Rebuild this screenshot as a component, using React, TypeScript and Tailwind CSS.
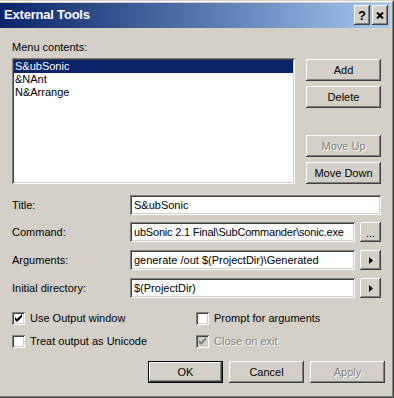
const raised =
  'shadow-[inset_-1px_-1px_#404040,inset_1px_1px_#ffffff,inset_-2px_-2px_#808080,inset_2px_2px_#d4d0c8]';
const sunken =
  'shadow-[inset_1px_1px_#808080,inset_-1px_-1px_#ffffff,inset_2px_2px_#404040,inset_-2px_-2px_#d4d0c8]';
const dimText = 'text-[#808080] [text-shadow:1px_1px_0_#ffffff]';

type BtnProps = { label: string; disabled?: boolean; isDefault?: boolean; className?: string };

function Button({ label, disabled, isDefault, className = '' }: BtnProps) {
  return (
    <div
      className={`flex items-center justify-center w-[75px] h-[22px] bg-[#d4d0c8] ${raised} ${
        isDefault ? 'border border-black' : ''
      } ${disabled ? dimText : 'text-black'} ${className}`}
    >
      {label}
    </div>
  );
}

function Field({ value, className = '' }: { value: string; className?: string }) {
  return (
    <div
      className={`h-[20px] bg-white ${sunken} flex items-center pl-[4px] overflow-hidden whitespace-nowrap ${className}`}
    >
      {value}
    </div>
  );
}

function Arrow() {
  return (
    <div className={`w-[21px] h-[20px] bg-[#d4d0c8] ${raised} flex items-center justify-center`}>
      <svg width="4" height="7" viewBox="0 0 4 7">
        <polygon points="0,0 4,3.5 0,7" fill="#000" />
      </svg>
    </div>
  );
}

function Check({ checked, disabled, label }: { checked?: boolean; disabled?: boolean; label: string }) {
  return (
    <div className="flex items-center gap-[5px] h-[13px]">
      <div className={`w-[13px] h-[13px] shrink-0 ${sunken} ${disabled ? 'bg-[#d4d0c8]' : 'bg-white'}`}>
        {checked && (
          <svg width="13" height="13" viewBox="0 0 13 13">
            <path d="M3 5 L5 7 L10 2 L10 5 L5 10 L3 8 Z" fill={disabled ? '#808080' : '#000'} />
          </svg>
        )}
      </div>
      <span className={disabled ? dimText : ''}>{label}</span>
    </div>
  );
}

const ITEMS = ['S&ubSonic', '&NAnt', 'N&Arrange'];

export default function App() {
  return (
    <div className="w-[394px] h-[398px] overflow-hidden bg-[#d4d0c8] font-['Liberation_Sans',Arial,sans-serif] text-[11px] leading-[13px] text-black border-t border-t-[#d4d0c8] border-r border-r-[#404040] border-b border-b-[#404040]">
      <div className="h-full flex flex-col border-t border-t-white border-r border-r-[#808080] border-b border-b-[#808080] pt-px pr-[2px]">
        {/* caption */}
        <div className="h-[25px] flex items-start pt-[2px] pl-[4px] pr-[2px] bg-linear-to-r from-[#0a246a] to-[#a6caf0]">
          <span className="flex-1 text-white font-bold text-[13px] leading-[20px] tracking-[-0.2px]">
            External Tools
          </span>
          <div className="flex gap-[2px]">
            <div className={`w-[16px] h-[20px] bg-[#d4d0c8] ${raised} flex items-center justify-center font-bold text-[13px]`}>
              ?
            </div>
            <div className={`w-[16px] h-[20px] bg-[#d4d0c8] ${raised} flex items-center justify-center`}>
              <svg width="8" height="7" viewBox="0 0 8 7">
                <path d="M1 0.5 L7 6.5 M7 0.5 L1 6.5" stroke="#000" strokeWidth="2" />
              </svg>
            </div>
          </div>
        </div>

        <div className="flex flex-col pl-[12px] pt-[13px]">
          <div>Menu contents:</div>

          <div className="flex mt-[4px]">
            <div className={`w-[283px] h-[126px] bg-white ${sunken} p-[2px]`}>
              {ITEMS.map((it, i) => (
                <div
                  key={it}
                  className={`h-[13px] pl-[1px] whitespace-nowrap ${i === 0 ? 'bg-[#0a246a] text-white' : ''}`}
                >
                  {it}
                </div>
              ))}
            </div>
            <div className="ml-[11px] flex flex-col">
              <Button label="Add" className="mt-px" />
              <Button label="Delete" className="mt-[5px]" />
              <Button label="Move Up" disabled className="mt-[27px]" />
              <Button label="Move Down" className="mt-[5px]" />
            </div>
          </div>

          <div className="flex flex-col w-[369px] mt-[11px]">
            <div className="flex items-center">
              <span className="w-[118px]">Title:</span>
              <Field value="S&ubSonic" className="flex-1" />
            </div>
            <div className="flex items-center gap-[5px] mt-[7px]">
              <span className="w-[113px]">Command:</span>
              <Field value={'ubSonic 2.1 Final\\SubCommander\\sonic.exe'} className="flex-1 tracking-[-0.2px]" />
              <div className={`w-[21px] h-[20px] bg-[#d4d0c8] ${raised} flex items-center justify-center pt-[3px]`}>
                ...
              </div>
            </div>
            <div className="flex items-center gap-[5px] mt-[8px]">
              <span className="w-[113px]">Arguments:</span>
              <Field value={'generate /out $(ProjectDir)\\Generated'} className="flex-1" />
              <Arrow />
            </div>
            <div className="flex items-center gap-[5px] mt-[8px]">
              <span className="w-[113px]">Initial directory:</span>
              <Field value="$(ProjectDir)" className="flex-1" />
              <Arrow />
            </div>
          </div>

          <div className="grid grid-cols-[184px_1fr] gap-y-[10px] mt-[14px]">
            <Check checked label="Use Output window" />
            <Check label="Prompt for arguments" />
            <Check label="Treat output as Unicode" />
            <Check checked disabled label="Close on exit" />
          </div>

          <div className="flex gap-[6px] pl-[136px] mt-[13px]">
            <Button label="OK" isDefault />
            <Button label="Cancel" />
            <Button label="Apply" disabled />
          </div>
        </div>
      </div>
    </div>
  );
}
